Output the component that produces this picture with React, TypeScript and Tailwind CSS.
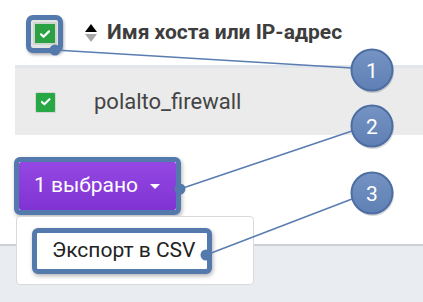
import React from 'react'

const Check = ({ size }: { size: number }) => (
  <svg width={size * 0.6} height={size * 0.6} viewBox="0 0 12 12" fill="none">
    <path d="M2 6.3l2.6 2.5L10 3.4" stroke="white" strokeWidth="2.2" strokeLinecap="round" strokeLinejoin="round" />
  </svg>
)

const Callout = ({ cx, cy, n }: { cx: number; cy: number; n: string }) => (
  <g>
    <circle cx={cx + 1} cy={cy + 2} r="21" fill="rgba(0,0,0,0.15)" />
    <circle cx={cx} cy={cy} r="20.5" fill="url(#cg)" stroke="#4d6ea2" strokeWidth="2" />
    <text
      x={cx}
      y={cy + 7.5}
      textAnchor="middle"
      fill="white"
      fontSize="21"
      fontFamily="Roboto, sans-serif"
    >
      {n}
    </text>
  </g>
)

export default function App() {
  return (
    <div className="relative w-[423px] h-[302px] overflow-hidden bg-white flex flex-col font-['Roboto',sans-serif]">
      {/* header */}
      <div className="h-[65px] flex items-center pl-[26px] shrink-0">
        <div className="mt-[2px] w-[37px] h-[38px] border-[5px] border-[#5479ad] rounded-[7px] bg-[#e4e4e4] flex items-center justify-center shadow-[1px_2px_3px_rgba(0,0,0,0.3)]">
          <div className="w-[24px] h-[23px] bg-[#2ba144] border-2 border-[#cfd6cf] flex items-center justify-center">
            <Check size={20} />
          </div>
        </div>
        <div className="ml-[22px] flex flex-col items-center gap-[2px]">
          <div className="w-0 h-0 border-x-[6px] border-x-transparent border-b-[8px] border-b-black" />
          <div className="w-0 h-0 border-x-[6px] border-x-transparent border-t-[8px] border-t-[#a8a8a8]" />
        </div>
        <span className="ml-[10px] text-[21px] font-bold text-[#3d3d3d]">Имя хоста или IP-адрес</span>
      </div>

      {/* row */}
      <div className="ml-[15px] h-[70px] border-t-[3px] border-[#e1e6ec] bg-[#ebebeb] flex items-center pl-[20px] shrink-0">
        <div className="w-[21px] h-[21px] bg-[#27a844] border border-[#d6d6d6] rounded-[2px] flex items-center justify-center mt-[1px]">
          <Check size={19} />
        </div>
        <span className="ml-[38px] text-[22px] text-[#444]">polalto_firewall</span>
      </div>

      {/* button + menu */}
      <div className="relative ml-[14px] mt-[22px] self-start z-10">
        <div className="w-[167px] h-[58px] border-[5px] border-[#5479ad] rounded-[6px] shadow-[1px_2px_4px_rgba(0,0,0,0.3)]">
          <button className="w-full h-full rounded-[2px] bg-gradient-to-b from-[#9447e2] to-[#8033d2] text-white text-[21px] flex items-center pl-[15px]">
            1 выбрано
            <span className="ml-[12px] w-0 h-0 border-x-[5px] border-x-transparent border-t-[5px] border-t-white" />
          </button>
        </div>
        <div className="absolute left-[2px] top-[59px] w-[238px] h-[69px] bg-white border border-[#d9d9d9] rounded-[4px] pt-[11px] pl-[15px]">
          <div className="w-[180px] h-[46px] border-[5px] border-[#5479ad] rounded-[6px] bg-white flex items-center pl-[15px] text-[21px] text-[#222] shadow-[1px_2px_4px_rgba(0,0,0,0.3)]">
            Экспорт в CSV
          </div>
        </div>
      </div>

      {/* bottom area */}
      <div className="mt-[29px] flex-1 border-t-2 border-[#cdd0d4] bg-[#e9edf2]" />

      {/* annotations */}
      <svg className="absolute inset-0 pointer-events-none z-20" width="423" height="302">
        <defs>
          <linearGradient id="cg" x1="0" y1="0" x2="0" y2="1">
            <stop offset="0" stopColor="#7593c3" />
            <stop offset="1" stopColor="#5f80b4" />
          </linearGradient>
        </defs>
        <g stroke="#5a7db1" strokeWidth="1.6">
          <line x1="55" y1="50" x2="352" y2="68" />
          <line x1="180" y1="189" x2="352" y2="131" />
          <line x1="206" y1="255" x2="352" y2="199" />
        </g>
        <g fill="#5479ad">
          <circle cx="55" cy="50" r="5.5" />
          <circle cx="180" cy="189" r="5.5" />
          <circle cx="206" cy="255" r="5.5" />
        </g>
        <Callout cx={372} cy={70} n="1" />
        <Callout cx={372} cy={126} n="2" />
        <Callout cx={372} cy={193} n="3" />
      </svg>
    </div>
  )
}
